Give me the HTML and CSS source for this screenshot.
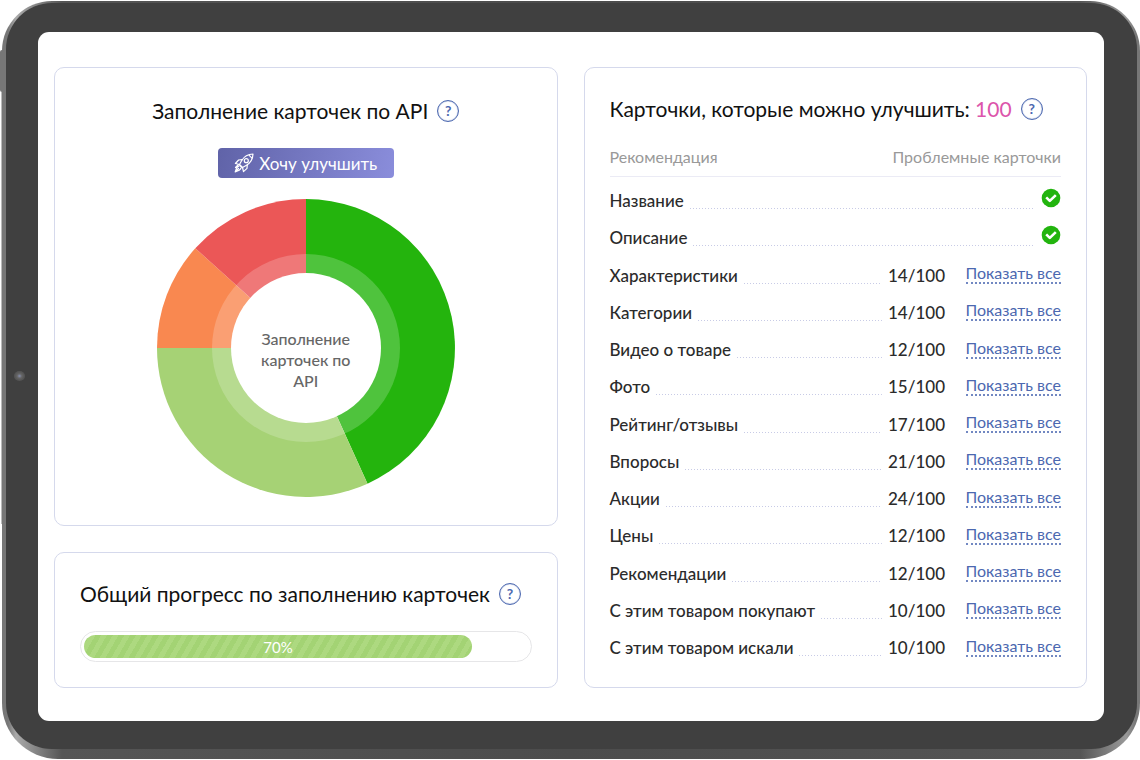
FILE: index.html
```html
<!DOCTYPE html>
<html lang="ru">
<head>
<meta charset="utf-8">
<title>Заполнение карточек</title>
<link rel="stylesheet" href="styles.css">
</head>
<body>
<svg class="sprite" aria-hidden="true">
  <symbol id="check" viewBox="0 0 20 20">
    <circle cx="10" cy="10" r="9.3" fill="#22b40e"/>
    <path d="M5.2 9.400l3.600 3.500 6-5.800" fill="none" stroke="#fff" stroke-width="2.6" stroke-linejoin="round"/>
  </symbol>
</svg>
<div class="tablet">
  <span class="side-button side-button-top"></span>
  <span class="side-button side-button-long"></span>
  <div class="bezel">
    <span class="camera"></span>
    <main class="screen">
      <div class="left">
        <section class="card chart-card">
          <header class="title">
            <h2>Заполнение карточек по API</h2>
            <button class="help" type="button" aria-label="Справка">?</button>
          </header>
          <button class="improve" type="button">
            <svg class="rocket" viewBox="0 0 20 20" fill="none" stroke="#fff" stroke-width="1.2" stroke-linejoin="round" stroke-linecap="round">
              <path d="M19 1c-5 .2-8.600 2-11.300 6.500L5.500 11.500l3 3 4-2.200C17 9.600 18.800 6 19 1z"/>
              <circle cx="12.300" cy="7.700" r="2"/>
              <path d="M15.200 2.300l2.500 2.500M8.200 6.700L4.600 7 1.400 10.500l4.100 1M13.300 11.800L13 15.400 9.500 18.600l-1-4.100M6 12.500l1.500 1.500M5 13c-2 .8-3 3-3.800 5.800C4 18 6.300 17 7 15M4.500 15.500L2.500 17.500M1.500 14.500L4 12"/>
            </svg>
            Хочу улучшить
          </button>
          <div class="donut">
            <svg viewBox="-149 -149 298 298" aria-hidden="true">
              <path fill="#24b40d" d="M0 0V-149A149 149 0 0 1 61.500 135.700z"/>
              <path fill="#a6d275" d="M0 0L61.500 135.700A149 149 0 0 1 -149 0z"/>
              <path fill="#f98850" d="M0 0H-149A149 149 0 0 1 -110.700 -99.700z"/>
              <path fill="#eb5757" d="M0 0L-110.700 -99.700A149 149 0 0 1 0 -149z"/>
              <circle r="94" fill="#fff" fill-opacity=".2"/>
              <circle r="75" fill="#fff"/>
            </svg>
            <p class="donut-label">Заполнение карточек по API</p>
          </div>
        </section>
        <section class="card progress-card">
          <header class="title">
            <h2>Общий прогресс по заполнению карточек</h2>
            <button class="help" type="button" aria-label="Справка">?</button>
          </header>
          <div class="track"><div class="fill">70%</div></div>
        </section>
      </div>
      <section class="card list-card">
        <header class="title">
          <h2>Карточки, которые можно улучшить: <span class="total">100</span></h2>
          <button class="help" type="button" aria-label="Справка">?</button>
        </header>
        <table>
          <thead><tr><th>Рекомендация</th><th class="right" colspan="2">Проблемные карточки</th></tr></thead>
          <tbody>
            <tr><td colspan="3"><div class="line">Название<i></i><svg class="check" role="img" aria-label="Готово"><use href="#check"/></svg></div></td></tr>
            <tr><td colspan="3"><div class="line">Описание<i></i><svg class="check" role="img" aria-label="Готово"><use href="#check"/></svg></div></td></tr>
            <tr><td><div class="line">Характеристики<i></i></div></td><td class="count">14/100</td><td class="right"><a href="#">Показать все</a></td></tr>
            <tr><td><div class="line">Категории<i></i></div></td><td class="count">14/100</td><td class="right"><a href="#">Показать все</a></td></tr>
            <tr><td><div class="line">Видео о товаре<i></i></div></td><td class="count">12/100</td><td class="right"><a href="#">Показать все</a></td></tr>
            <tr><td><div class="line">Фото<i></i></div></td><td class="count">15/100</td><td class="right"><a href="#">Показать все</a></td></tr>
            <tr><td><div class="line">Рейтинг/отзывы<i></i></div></td><td class="count">17/100</td><td class="right"><a href="#">Показать все</a></td></tr>
            <tr><td><div class="line">Впоросы<i></i></div></td><td class="count">21/100</td><td class="right"><a href="#">Показать все</a></td></tr>
            <tr><td><div class="line">Акции<i></i></div></td><td class="count">24/100</td><td class="right"><a href="#">Показать все</a></td></tr>
            <tr><td><div class="line">Цены<i></i></div></td><td class="count">12/100</td><td class="right"><a href="#">Показать все</a></td></tr>
            <tr><td><div class="line">Рекомендации<i></i></div></td><td class="count">12/100</td><td class="right"><a href="#">Показать все</a></td></tr>
            <tr><td><div class="line">С этим товаром покупают<i></i></div></td><td class="count">10/100</td><td class="right"><a href="#">Показать все</a></td></tr>
            <tr><td><div class="line">С этим товаром искали<i></i></div></td><td class="count">10/100</td><td class="right"><a href="#">Показать все</a></td></tr>
          </tbody>
        </table>
      </section>
    </main>
  </div>
</div>
</body>
</html>
```
FILE: styles.css
```css
* { box-sizing: border-box; }
body {
  margin: 0;
  padding: 1px 0 1px 2px;
  min-height: 100vh;
  display: flex;
  background: #fff;
  color: #111;
  font-family: Lato, "Noto Sans", sans-serif;
}
h2, p { margin: 0; font-weight: 400; }
button { font-family: inherit; cursor: pointer; }
.sprite { position: absolute; width: 0; height: 0; }

.tablet {
  position: relative;
  flex: 1;
  display: flex;
  padding: 2px 3px 10px 4px;
  border-radius: 50px 50px 56px 56px;
  background: linear-gradient(90deg, #777 0, #777 6px, #aaa 14px, #555 60px, #4c4c4c 50%, #555 calc(100% - 60px), #999 calc(100% - 14px), #777 calc(100% - 4px));
}
.side-button {
  position: absolute;
  background: #777;
}
.side-button-top { left: -2px; top: 49px; width: 3px; height: 42px; border-radius: 2px 0 0 2px; }
.side-button-long { left: -1px; top: 91px; width: 1px; height: 432px; background: #bbb; }
.bezel {
  position: relative;
  flex: 1;
  display: flex;
  padding: 29px 33px 28px 32px;
  border-radius: 46px;
  background: #404040;
}
.camera {
  position: absolute;
  left: 8px;
  top: 50%;
  width: 11px;
  height: 10px;
  transform: translateY(-50%);
  border-radius: 50%;
  background: radial-gradient(#8890b0 0, #666 30%, #555 60%);
}
.screen {
  flex: 1;
  display: grid;
  grid-template-columns: 1fr 1fr;
  gap: 26px;
  padding: 35px 17px 33px 16px;
  border-radius: 11px;
  background: #fff;
}
.left { display: flex; flex-direction: column; gap: 26px; }
.card {
  border: 1px solid #d5d9ec;
  border-radius: 10px;
  padding: 0 25px;
}
.title { display: flex; align-items: center; gap: 9px; }
.title h2 { font-size: 21px; line-height: 28px; white-space: nowrap; }
.help {
  width: 22px;
  height: 22px;
  padding: 0;
  border: 1px solid #4c68b0;
  border-radius: 50%;
  box-shadow: inset 0 0 1px #4c68b0;
  background: none;
  color: #4c68b0;
  font-size: 14px;
  font-weight: 700;
  line-height: 18px;
}

.chart-card {
  flex: 1;
  display: flex;
  flex-direction: column;
  align-items: center;
  padding-top: 29px;
  padding-bottom: 26px;
}
.improve {
  display: flex;
  align-items: center;
  justify-content: center;
  gap: 5px;
  width: 176px;
  height: 30px;
  margin: 23px 0 21px;
  padding: 0;
  border: 0;
  border-radius: 4px;
  background: linear-gradient(100deg, #6063a8, #8a8ddb);
  color: #fff;
  font-size: 17px;
}
.rocket { width: 20px; height: 20px; }
.donut { display: grid; place-items: center; width: 298px; }
.donut > * { grid-area: 1 / 1; }
.donut svg { width: 100%; display: block; }
.donut-label {
  width: 100px;
  padding-top: 22px;
  text-align: center;
  color: #666;
  font-size: 16px;
  font-weight: 500;
  line-height: 21px;
}

.progress-card { padding-top: 27px; padding-bottom: 25px; }
.track {
  height: 31px;
  margin-top: 23px;
  padding: 3px;
  border: 1px solid #e6e6e8;
  border-radius: 16px;
}
.fill {
  width: 87.500%;
  height: 100%;
  border-radius: 12px;
  background: repeating-linear-gradient(120deg, #a3d374 0, #a3d374 5px, #add980 5px, #add980 10px);
  color: #fff;
  font-size: 15px;
  line-height: 24px;
  text-align: center;
}

.list-card { display: flex; flex-direction: column; padding-top: 27px; padding-bottom: 26px; }
.total { color: #dc55ab; }
table { flex: 1; width: 100%; margin-top: 19px; border-collapse: collapse; }
th {
  height: 34px;
  padding: 0 0 4px;
  border-bottom: 1px solid #ebebf5;
  color: #999;
  font-size: 16px;
  font-weight: 400;
  line-height: 20px;
  text-align: left;
}
td { padding: 0; font-size: 17px; font-weight: 500; line-height: 22px; color: #2b2b2b; }
th.right, td.right { text-align: right; }
.line { display: flex; padding-top: 12px; white-space: nowrap; }
.line i {
  flex: 1;
  margin: 0 6px 3px;
  background: repeating-linear-gradient(90deg, #c8cbe6 0, #c8cbe6 1px, transparent 1px, transparent 3px) bottom / 100% 1px no-repeat;
}
.count { width: 57px; padding-top: 12px; }
td.right { width: 116px; padding-top: 7px; }
.check { width: 20px; height: 20px; margin-top: -2px; }
a {
  display: inline-block;
  border-bottom: 2px dotted #7288c2;
  color: #4c68b0;
  font-size: 16px;
  font-weight: 400;
  line-height: 18px;
  text-decoration: none;
}
```
